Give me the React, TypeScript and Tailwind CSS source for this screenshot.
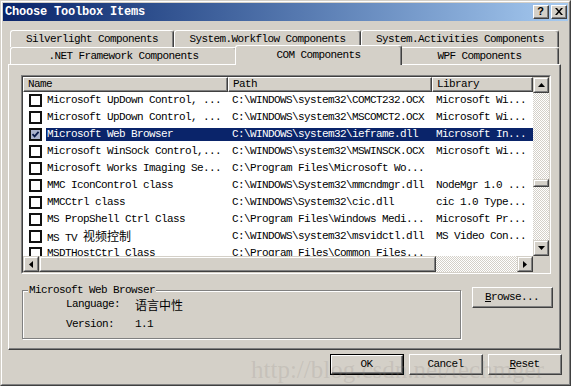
import type { ReactNode } from 'react';

const cjk = "font-['Noto_Sans_CJK_SC',sans-serif] text-[12px] tracking-normal leading-[13px]";

type Row = { name: ReactNode; path: string; lib: string; checked?: boolean; selected?: boolean };

const rows: Row[] = [
  { name: 'Microsoft UpDown Control, ...', path: 'C:\\WINDOWS\\system32\\COMCT232.OCX', lib: 'Microsoft Wi...' },
  { name: 'Microsoft UpDown Control, ...', path: 'C:\\WINDOWS\\system32\\MSCOMCT2.OCX', lib: 'Microsoft Wi...' },
  { name: 'Microsoft Web Browser', path: 'C:\\WINDOWS\\system32\\ieframe.dll', lib: 'Microsoft In...', checked: true, selected: true },
  { name: 'Microsoft WinSock Control,...', path: 'C:\\WINDOWS\\system32\\MSWINSCK.OCX', lib: 'Microsoft Wi...' },
  { name: 'Microsoft Works Imaging Se...', path: 'C:\\Program Files\\Microsoft Wo...', lib: '' },
  { name: 'MMC IconControl class', path: 'C:\\WINDOWS\\System32\\mmcndmgr.dll', lib: 'NodeMgr 1.0 ...' },
  { name: 'MMCCtrl class', path: 'C:\\WINDOWS\\System32\\cic.dll', lib: 'cic 1.0 Type...' },
  { name: 'MS PropShell Ctrl Class', path: 'C:\\Program Files\\Windows Medi...', lib: 'Microsoft Pr...' },
  { name: <>MS TV <span className={cjk}>视频控制</span></>, path: 'C:\\WINDOWS\\system32\\msvidctl.dll', lib: 'MS Video Con...' },
  { name: 'MSDTHostCtrl Class', path: 'C:\\Program Files\\Common Files...', lib: '' },
];

// classic raised 3d box (buttons)
function Raised({ className = '', children }: { className?: string; children?: ReactNode }) {
  return (
    <div className={`shrink-0 border border-t-white border-l-white border-r-[#404040] border-b-[#404040] bg-[#d4d0c8] ${className}`}>
      <div className="flex h-full w-full items-center justify-center border-r border-b border-[#808080]">
        {children}
      </div>
    </div>
  );
}

// scrollbar button / thumb
function ScrollPart({ className = '', children }: { className?: string; children?: ReactNode }) {
  return (
    <div className={`shrink-0 border border-t-[#d4d0c8] border-l-[#d4d0c8] border-r-[#404040] border-b-[#404040] bg-[#d4d0c8] ${className}`}>
      <div className="flex h-full w-full items-center justify-center border border-t-white border-l-white border-r-[#808080] border-b-[#808080]">
        {children}
      </div>
    </div>
  );
}

function Arrow({ dir }: { dir: 'up' | 'down' | 'left' | 'right' }) {
  if (dir === 'up' || dir === 'down') {
    return (
      <svg width="7" height="4" viewBox="0 0 7 4">
        <polygon points={dir === 'up' ? '3.5,0 7,4 0,4' : '0,0 7,0 3.5,4'} fill="black" />
      </svg>
    );
  }
  return (
    <svg width="4" height="7" viewBox="0 0 4 7">
      <polygon points={dir === 'left' ? '4,0 4,7 0,3.5' : '0,0 4,3.5 0,7'} fill="black" />
    </svg>
  );
}

const checker = 'bg-[image:repeating-conic-gradient(#ffffff_0%_25%,#d4d0c8_0%_50%)] bg-[length:2px_2px]';

function Tab({ label, className = '', active = false }: { label: string; className?: string; active?: boolean }) {
  return (
    <div
      className={`flex shrink-0 items-center justify-center rounded-t-[3px] border-t border-l border-r border-t-white border-l-white border-r-[#404040] bg-[#d4d0c8] shadow-[inset_-1px_0_0_#808080] ${
        active ? 'relative z-10 -mx-[2px] -mb-px h-[20px] pb-px' : 'h-[17px]'
      } ${className}`}
    >
      <span className="whitespace-nowrap">{label}</span>
    </div>
  );
}

function CheckBox({ checked }: { checked?: boolean }) {
  return (
    <div className={`flex h-[13px] w-[13px] items-center justify-center border-2 border-[#111] ${checked ? 'bg-[#aab2cc]' : 'bg-white'}`}>
      {checked && (
        <svg width="9" height="9" viewBox="0 0 9 9">
          <path d="M1.5 4.2 L3.6 6.4 L7.6 1.8" stroke="#0a1a4a" strokeWidth="1.8" fill="none" />
        </svg>
      )}
    </div>
  );
}

function HeaderCell({ label, className = '' }: { label: string; className?: string }) {
  return (
    <div className={`flex h-full shrink-0 items-center border border-t-white border-l-white border-r-[#404040] border-b-[#404040] pl-[4px] shadow-[inset_-1px_-1px_0_#808080] ${className}`}>
      {label}
    </div>
  );
}

function ListView() {
  return (
    <div className="h-[199px] w-[530px] shrink-0 border border-t-[#808080] border-l-[#808080] border-r-white border-b-white">
      <div className="flex h-full w-full flex-col border border-t-[#404040] border-l-[#404040] border-r-[#d4d0c8] border-b-[#d4d0c8] bg-white">
        <div className="flex h-[179px]">
          <div className="flex w-[510px] flex-col overflow-hidden">
            <div className="flex h-[15px] shrink-0 bg-[#d4d0c8]">
              <HeaderCell label="Name" className="w-[205px]" />
              <HeaderCell label="Path" className="w-[204px]" />
              <HeaderCell label="Library" className="w-[101px]" />
            </div>
            <div className="flex-1 overflow-hidden">
              {rows.map((r, i) => (
                <div key={i} className="flex h-[17px] items-center">
                  <div className="flex w-[23px] shrink-0 pl-[6px]">
                    <CheckBox checked={r.checked} />
                  </div>
                  <div className={`flex h-[13px] items-center leading-[13px] ${r.selected ? 'bg-[#0a246a] text-white' : ''}`}>
                    <span className="w-[182px] shrink-0 whitespace-nowrap pl-px">{r.name}</span>
                    <span className="w-[204px] shrink-0 whitespace-nowrap pl-[4px]">{r.path}</span>
                    <span className="w-[101px] shrink-0 whitespace-nowrap pl-[4px]">{r.lib}</span>
                  </div>
                </div>
              ))}
            </div>
          </div>
          <div className="flex w-[16px] flex-col">
            <ScrollPart className="h-[16px]">
              <Arrow dir="up" />
            </ScrollPart>
            <div className={`flex-1 ${checker}`}>
              <ScrollPart className="mt-[86px] h-[8px]" />
            </div>
            <ScrollPart className="h-[16px]">
              <Arrow dir="down" />
            </ScrollPart>
          </div>
        </div>
        <div className="flex h-[16px]">
          <div className="flex w-[510px]">
            <ScrollPart className="w-[16px]">
              <Arrow dir="left" />
            </ScrollPart>
            <ScrollPart className="w-[397px]" />
            <div className={`flex-1 ${checker}`} />
            <ScrollPart className="w-[16px]">
              <Arrow dir="right" />
            </ScrollPart>
          </div>
          <div className="w-[16px] bg-[#d4d0c8]" />
        </div>
      </div>
    </div>
  );
}

export default function App() {
  return (
    <div className="relative h-[386px] w-[571px] overflow-hidden border border-t-[#d4d0c8] border-l-[#d4d0c8] border-r-[#404040] border-b-[#404040] bg-[#d4d0c8] font-['Liberation_Mono',monospace] text-[11px] tracking-[-0.6px] text-black">
      <div className="flex h-full flex-col border border-t-white border-l-white border-r-[#808080] border-b-[#808080] p-px">
        {/* Title bar */}
        <div className="flex h-[18px] shrink-0 items-center bg-linear-to-r from-[#0a246a] to-[#a6caf0] pl-[2px] pr-[1px]">
          <span className="flex-1 text-[12px] font-bold tracking-[-0.2px] text-white">Choose Toolbox Items</span>
          <Raised className="h-[14px] w-[16px]">
            <span className="font-['Liberation_Sans',sans-serif] text-[11px] font-bold leading-none tracking-normal">?</span>
          </Raised>
          <Raised className="ml-[2px] h-[14px] w-[16px]">
            <svg width="8" height="7" viewBox="0 0 8 7">
              <path d="M0 0h2l2 2.5L6 0h2L5 3.5 8 7H6L4 4.5 2 7H0l3-3.5z" fill="black" />
            </svg>
          </Raised>
        </div>

        <div className="flex flex-1 flex-col pl-[5px] pr-[7px] pt-[9px]">
          {/* Tabs */}
          <div className="ml-[2px] flex h-[17px]">
            <Tab label="Silverlight Components" className="w-[164px]" />
            <Tab label="System.Workflow Components" className="w-[187px]" />
            <Tab label="System.Activities Components" className="w-[198px]" />
          </div>
          <div className="ml-[2px] flex h-[17px] items-end">
            <Tab label=".NET Framework Components" className="w-[227px]" />
            <Tab label="COM Components" className="w-[167px]" active />
            <Tab label="WPF Components" className="w-[159px]" />
          </div>

          {/* Tab panel */}
          <div className="h-[286px] shrink-0 border border-t-white border-l-white border-r-[#404040] border-b-[#404040]">
            <div className="flex h-full flex-col border-r border-b border-[#808080] pl-[12px] pt-[10px]">
              <ListView />
              <div className="mt-[10px] flex items-start">
                <fieldset className="ml-px w-[439px] border border-[#808080] p-0 shadow-[1px_1px_0_#ffffff,inset_1px_1px_0_#ffffff]">
                  <legend className="ml-[5px] bg-[#d4d0c8] px-px leading-[13px]">Microsoft Web Browser</legend>
                  <div className="flex flex-col gap-[6px] pb-[7px] pl-[43px]">
                    <div className="flex h-[14px] items-center">
                      <span className="w-[69px]">Language:</span>
                      <span className={cjk}>语言中性</span>
                    </div>
                    <div className="flex h-[14px] items-center">
                      <span className="w-[69px]">Version:</span>
                      <span>1.1</span>
                    </div>
                  </div>
                </fieldset>
                <Raised className="ml-[11px] mt-[3px] h-[21px] w-[81px]">
                  <span>
                    <span className="underline">B</span>rowse...
                  </span>
                </Raised>
              </div>
            </div>
          </div>

          {/* Dialog buttons */}
          <div className="-mr-px mt-[4px] flex justify-end gap-[5px]">
            <div className="h-[21px] w-[74px] border border-black">
              <Raised className="h-full w-full">OK</Raised>
            </div>
            <Raised className="h-[21px] w-[74px]">Cancel</Raised>
            <Raised className="h-[21px] w-[74px]">
              <span>
                <span className="underline">R</span>eset
              </span>
            </Raised>
          </div>
        </div>
      </div>

      {/* watermark */}
      <div className="pointer-events-none absolute left-[250px] top-[350px] font-['Liberation_Serif',serif] text-[25px] tracking-normal text-[#8a857e]/20">
        http://blog.csdn.net/techmger
      </div>
    </div>
  );
}
